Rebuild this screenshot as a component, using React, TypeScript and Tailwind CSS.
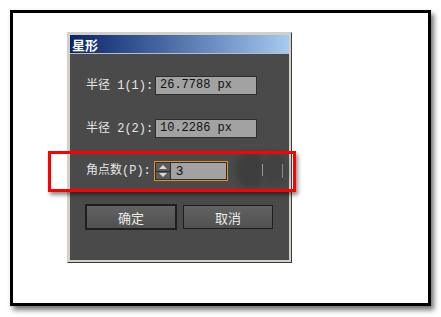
import React from 'react';

const labelFont = "font-['Liberation_Mono','Noto_Sans_CJK_SC',monospace]";

const Field: React.FC<{ label: string; value: string }> = ({ label, value }) => (
  <div className="flex items-center h-[19px]">
    <span className={`w-[69px] text-[12px] text-[#e6e6e6] whitespace-pre ${labelFont}`}>{label}</span>
    <div className={`w-[102px] h-[19px] bg-[#a2a2a2] border border-[#2e2e2e] pl-[4px] text-[12px] leading-[17px] text-[#111] whitespace-pre ${labelFont}`}>
      {value}
    </div>
  </div>
);

const App: React.FC = () => {
  return (
    <div className="relative w-[441px] h-[317px] bg-white pt-[10px] pl-[10px] overflow-hidden">
      <div className="w-[421px] h-[296px] border-[3px] border-black bg-white shadow-[3px_4px_5px_rgba(0,0,0,0.55)]">
        <div className="ml-[54px] mt-[19px] w-[225px] h-[231px] bg-[#d4d0c8] p-[2px] border border-t-[#d4d0c8] border-l-[#d4d0c8] border-r-[#3c3c3c] border-b-[#3c3c3c] flex flex-col">
          <div className="h-[18px] bg-gradient-to-r from-[#0a246a] to-[#a6caf0] flex items-center pl-[2px] shrink-0">
            <span className="text-[13px] font-bold text-white leading-none font-['Noto_Sans_CJK_SC',sans-serif]">星形</span>
          </div>
          <div className="flex-1 bg-[#4a4a4a] border-t border-[#bcbcbc] pl-[16px] pt-[22px] flex flex-col">
            <Field label="半径 1(1):" value="26.7788 px" />
            <div className="mt-[24px]">
              <Field label="半径 2(2):" value="10.2286 px" />
            </div>
            <div className="mt-[23px] flex items-center h-[20px]">
              <span className={`w-[68px] text-[12px] text-[#e6e6e6] whitespace-pre ${labelFont}`}>角点数(P):</span>
              <div className="w-[74px] h-[20px] border border-[#e8901e] flex">
                <div className="w-[16px] h-full bg-[#5c5c5c] border border-[#2e2e2e] flex flex-col">
                  <div className="flex-1 flex items-center justify-center border-b border-[#2e2e2e]">
                    <div className="w-0 h-0 border-l-[4px] border-r-[4px] border-b-[4px] border-l-transparent border-r-transparent border-b-[#d8d8d8]" />
                  </div>
                  <div className="flex-1 flex items-center justify-center">
                    <div className="w-0 h-0 border-l-[4px] border-r-[4px] border-t-[4px] border-l-transparent border-r-transparent border-t-[#d8d8d8]" />
                  </div>
                </div>
                <div className={`flex-1 bg-[#a2a2a2] border-y border-r border-[#2e2e2e] pl-[5px] text-[13px] leading-[16px] text-[#111] font-['Liberation_Sans',sans-serif]`}>
                  3
                </div>
              </div>
            </div>
            <div className="mt-[23px] flex items-center gap-[6px] -ml-px">
              <button className="w-[92px] h-[26px] border-2 border-[#1e1e1e] bg-gradient-to-b from-[#626262] to-[#505050] text-[13px] text-[#ececec] font-['Noto_Sans_CJK_SC',sans-serif] leading-none">
                确定
              </button>
              <button className="w-[90px] h-[24px] border border-[#1e1e1e] bg-gradient-to-b from-[#626262] to-[#505050] text-[13px] text-[#ececec] font-['Noto_Sans_CJK_SC',sans-serif] leading-none">
                取消
              </button>
            </div>
          </div>
        </div>
      </div>
      {/* blur artifacts */}
      <div className="absolute left-[236px] top-[152px] w-[28px] h-[36px] rounded-full bg-[#3e3e3e] blur-[3px]" />
      <div className="absolute left-[262px] top-[152px] w-[24px] h-[34px] rounded-full bg-[#424242] blur-[3px]" />
      <div className="absolute left-[262px] top-[164px] w-px h-[12px] bg-[#9a9a9a]" />
      <div className="absolute left-[282px] top-[164px] w-px h-[14px] bg-[#8a8a8a]" />
      {/* red annotation box */}
      <div className="absolute left-[48px] top-[151px] w-[248px] h-[41px] border-[3px] border-[#ff0000] shadow-[2px_3px_4px_rgba(0,0,0,0.45)]" />
    </div>
  );
};

export default App;
